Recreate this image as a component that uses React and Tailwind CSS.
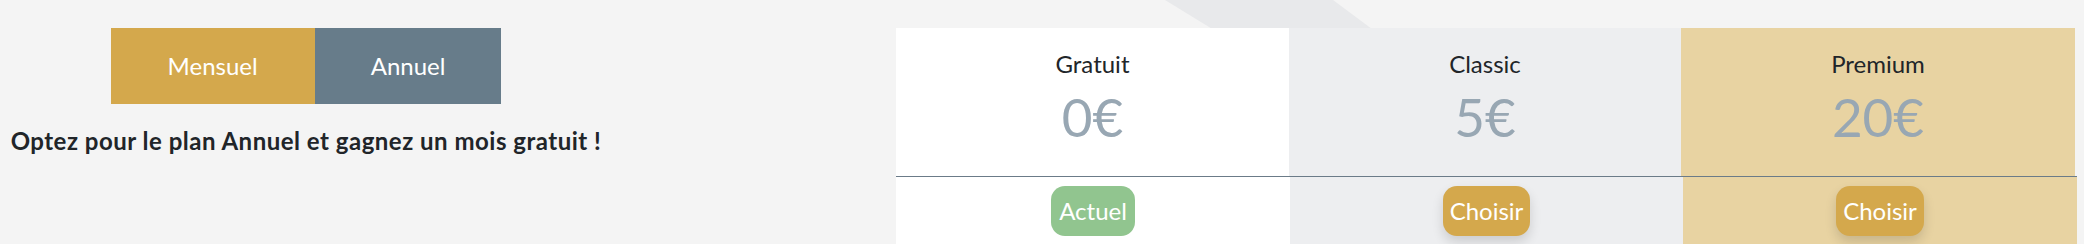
import React from "react";

const plans = [
  { name: "Gratuit", price: "0€", bg: "bg-white", action: "Actuel", top: "w-[393px]", bottom: "w-[394px]" },
  { name: "Classic", price: "5€", bg: "bg-[#edeef0]", action: "Choisir", top: "w-[392px]", bottom: "w-[393px]" },
  { name: "Premium", price: "20€", bg: "bg-[#e8d3a2]", action: "Choisir", top: "w-[394px]", bottom: "w-[394px]" },
];

export default function App() {
  return (
    <div
      className="relative w-[2084px] h-[244px] overflow-hidden bg-[#f4f4f4] text-[#212529]"
      style={{ fontFamily: "Lato, 'Noto Sans', sans-serif" }}
    >
      <svg className="absolute left-0 top-0" width="2084" height="40" aria-hidden="true">
        <polygon points="1165,0 1333,0 1384,38 1227,38" fill="#e8e9eb" />
      </svg>
      <div className="relative flex pt-[28px]">
        <div className="w-[612px] flex flex-col items-center">
          <div className="flex h-[76px] text-white text-[24px]">
            <button className="h-full px-[57px] bg-[#d4a84c]">Mensuel</button>
            <button className="h-full px-[56px] bg-[#677c8a]">Annuel</button>
          </div>
          <p className="mt-[21px] text-[24px] font-bold leading-[32px] tracking-[0.5px] whitespace-nowrap">
            Optez pour le plan Annuel et gagnez un mois gratuit !
          </p>
        </div>
        <div className="ml-[284px] flex flex-col">
          <div className="flex border-b border-[#6b7b88]">
            {plans.map((p) => (
              <div key={p.name} className={`${p.top} ${p.bg} h-[148px] flex flex-col items-center`}>
                <div className="mt-[21px] text-[24px] leading-[30px]">{p.name}</div>
                <div className="mt-[6px] text-[53px] leading-[64px] text-[#98a7b3]">{p.price}</div>
              </div>
            ))}
          </div>
          <div className="flex">
            {plans.map((p) => (
              <div key={p.name} className={`${p.bottom} ${p.bg} h-[80px] flex justify-center pt-[9px]`}>
                {p.action === "Actuel" ? (
                  <span className="h-[50px] px-[8px] rounded-[14px] bg-[#91c58f] text-white text-[24px] leading-[50px]">
                    Actuel
                  </span>
                ) : (
                  <span className="h-[50px] px-[7px] rounded-[14px] bg-[#d4a84c] text-white text-[24px] leading-[50px] shadow-[0_6px_12px_rgba(0,0,0,0.14)]">
                    Choisir
                  </span>
                )}
              </div>
            ))}
          </div>
        </div>
      </div>
    </div>
  );
}
